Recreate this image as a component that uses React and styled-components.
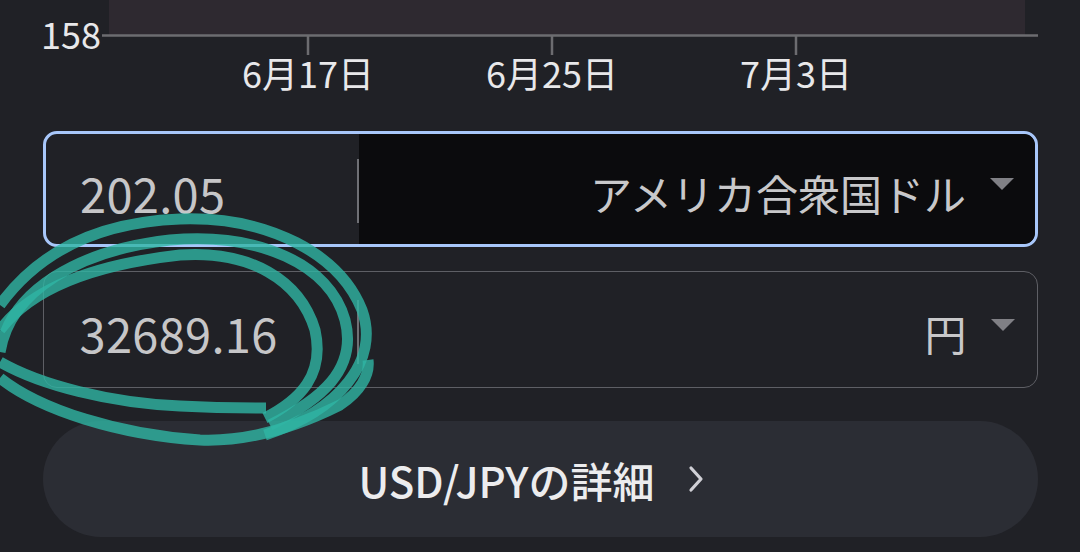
import React from 'react';
import styled, { createGlobalStyle } from 'styled-components';

const GlobalStyle = createGlobalStyle`
  html, body {
    margin: 0;
    padding: 0;
    background: #202126;
  }
  body {
    font-family: "Noto Sans CJK JP", "Noto Sans", sans-serif;
  }
`;

const TICKS = [
  { x: 308, label: '6月17日' },
  { x: 552, label: '6月25日' },
  { x: 796, label: '7月3日' },
];

const Page = styled.div`
  position: relative;
  width: 1080px;
  height: 552px;
  overflow: hidden;
  background: #202126;
  display: flex;
  flex-direction: column;
`;

const ChartSvg = styled.svg`
  display: block;
  flex: none;
`;

const Form = styled.div`
  display: flex;
  flex-direction: column;
  padding: 25px 42px 0 43px;
`;

const Field = styled.div`
  display: flex;
  align-items: stretch;
  height: ${(p) => (p.$focused ? '116px' : '117px')};
  box-sizing: border-box;
  border: ${(p) => (p.$focused ? '3px solid #a8c7fa' : '1.5px solid #5e5f65')};
  border-radius: 14px;
  margin-bottom: ${(p) => (p.$focused ? '24px' : '33px')};
  overflow: hidden;
`;

const Amount = styled.div`
  width: ${(p) => (p.$focused ? '311px' : '312.5px')};
  flex: none;
  display: flex;
  align-items: center;
  padding-left: ${(p) => (p.$focused ? '34px' : '35.5px')};
  padding-top: 6px;
  box-sizing: border-box;
  font-size: 47px;
  color: #c6c6c8;
  letter-spacing: 0.3px;
`;

const Divider = styled.div`
  width: 2px;
  flex: none;
  align-self: center;
  height: 64px;
  margin-top: 4px;
  background: #6f7075;
`;

const Currency = styled.div`
  flex: 1;
  display: flex;
  align-items: center;
  justify-content: flex-end;
  gap: 24px;
  padding-right: ${(p) => (p.$focused ? '21px' : '22.5px')};
  padding-top: 6px;
  background: ${(p) => (p.$focused ? '#0b0b0d' : 'transparent')};
  border-radius: 0 10px 10px 0;
  font-size: 42px;
  color: #c8c8ca;
`;

const Caret = styled.span`
  width: 0;
  height: 0;
  border-left: 12px solid transparent;
  border-right: 12px solid transparent;
  border-top: 12px solid #808085;
  margin-bottom: 16px;
`;

const DetailButton = styled.button`
  height: 116px;
  border: none;
  border-radius: 58px;
  background: #2b2d34;
  display: flex;
  align-items: center;
  justify-content: center;
  gap: 32px;
  padding: 0 18px 0 0;
  font-family: "Noto Sans CJK JP", "Noto Sans", sans-serif;
  font-size: 42px;
  font-weight: 500;
  color: #ececee;
  cursor: pointer;
`;

const Scribble = styled.svg`
  position: absolute;
  left: 0;
  top: 0;
  pointer-events: none;
`;

const Chart = () => (
  <ChartSvg width="1080" height="106" viewBox="0 0 1080 106">
    <rect x="109" y="0" width="916" height="35" fill="#2e2930" />
    <line x1="102" y1="35.5" x2="1038" y2="35.5" stroke="#6c6c70" strokeWidth="2.5" />
    <text
      x="101"
      y="49"
      textAnchor="end"
      fill="#e8e8ea"
      fontSize="36"
      fontFamily="Noto Sans CJK JP, Noto Sans, sans-serif"
    >
      158
    </text>
    {TICKS.map((t) => (
      <g key={t.label}>
        <line x1={t.x} y1="35" x2={t.x} y2="55" stroke="#6c6c70" strokeWidth="2.5" />
        <text
          x={t.x}
          y="88"
          textAnchor="middle"
          fill="#e8e8ea"
          fontSize="36"
          fontFamily="Noto Sans CJK JP, Noto Sans, sans-serif"
        >
          {t.label}
        </text>
      </g>
    ))}
  </ChartSvg>
);

const FIELDS = [
  { amount: '202.05', currency: 'アメリカ合衆国ドル', focused: true },
  { amount: '32689.16', currency: '円', focused: false },
];

export default function App() {
  return (
    <Page>
      <GlobalStyle />
      <Chart />
      <Form>
        {FIELDS.map((f) => (
          <Field key={f.amount} $focused={f.focused}>
            <Amount $focused={f.focused}>{f.amount}</Amount>
            <Divider />
            <Currency $focused={f.focused}>
              {f.currency}
              <Caret />
            </Currency>
          </Field>
        ))}
        <DetailButton>
          USD/JPYの詳細
          <svg width="18" height="28" viewBox="0 0 18 28">
            <path d="M4 3 L14 14 L4 25" fill="none" stroke="#d0d0d6" strokeWidth="3.2" strokeLinecap="round" strokeLinejoin="round" />
          </svg>
        </DetailButton>
      </Form>
      <Scribble width="1080" height="552" viewBox="0 0 1080 552">
        <g fill="none" stroke="#30b5a4" strokeOpacity="0.8" strokeWidth="11" strokeLinecap="butt">
          <path d="M0 305 C40 250 100 222 180 219 C270 216 340 255 362 310 C380 360 340 410 265 435" />
          <path d="M0 352 C10 290 80 250 170 240 C260 232 330 265 345 320 C358 370 320 400 270 425" />
          <path d="M0 330 C30 290 90 265 180 255 C250 250 300 280 315 330 C325 375 300 400 265 418" />
          <path d="M0 362 C40 385 110 403 180 406 C220 408 250 408 266 408" />
          <path d="M0 378 C40 410 120 435 200 440 C250 442 300 425 340 405 C360 392 370 375 368 360" />
        </g>
      </Scribble>
    </Page>
  );
}
